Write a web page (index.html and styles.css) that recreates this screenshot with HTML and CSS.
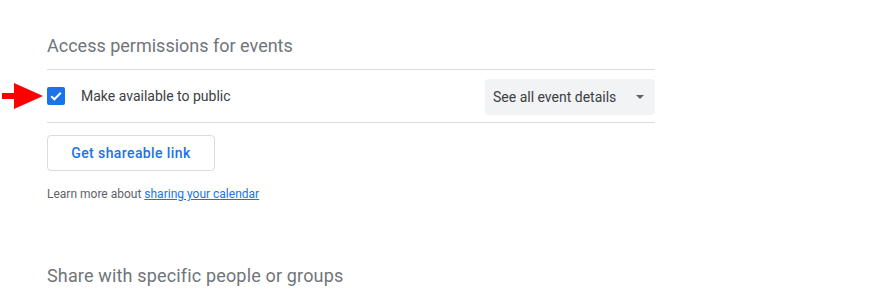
FILE: index.html
```html
<!DOCTYPE html>
<html>
<head>
<meta charset="utf-8">
<link rel="stylesheet" href="styles.css">
</head>
<body>
<div class="section">
  <h2 class="heading">Access permissions for events</h2>
  <div class="row">
    <svg class="annot-arrow" width="44" height="28" viewBox="0 0 44 28">
      <rect x="2" y="11" width="14" height="6" fill="#ff0000"/>
      <polygon points="14,1 43,14 14,27" fill="#ff0000"/>
    </svg>
    <label class="check">
      <span class="box">
        <svg width="18" height="18" viewBox="0 0 18 18"><path d="M4.2 9.2 L7.4 12.3 L13.8 5.8" fill="none" stroke="#fff" stroke-width="2"/></svg>
      </span>
      <span class="check-label">Make available to public</span>
    </label>
    <div class="select">
      <span>See all event details</span>
      <span class="caret"></span>
    </div>
  </div>
  <button class="btn">Get shareable link</button>
  <p class="note">Learn more about <a href="#">sharing your calendar</a></p>
  <h2 class="heading heading2">Share with specific people or groups</h2>
</div>
</body>
</html>
```
FILE: styles.css
```css
html, body {
  margin: 0;
  padding: 0;
  background: #fff;
}
body {
  font-family: Roboto, "Liberation Sans", Arial, sans-serif;
  color: #3c4043;
}
.section {
  width: 608px;
  padding-left: 47px;
  padding-top: 34px;
}
.heading {
  margin: 0;
  font-weight: 400;
  font-size: 18px;
  line-height: 24px;
  color: #70757a;
  padding-bottom: 11px;
  border-bottom: 1px solid #dadce0;
}
.heading2 {
  border-bottom: none;
  margin-top: 62px;
  letter-spacing: 0.16px;
}
.row {
  position: relative;
  display: flex;
  align-items: center;
  justify-content: space-between;
  height: 52px;
  border-bottom: 1px solid #dadce0;
}
.annot-arrow {
  position: absolute;
  left: -47px;
  top: 12px;
}
.check {
  display: flex;
  align-items: center;
  gap: 16px;
  font-size: 14px;
  color: #3c4043;
}
.box {
  width: 18px;
  height: 18px;
  border-radius: 2px;
  background: #1a73e8;
  display: block;
}
.box svg { display: block; }
.select {
  display: flex;
  align-items: center;
  justify-content: space-between;
  box-sizing: border-box;
  width: 170px;
  height: 36px;
  padding: 0 11px 0 8px;
  background: #f1f3f4;
  border-radius: 4px;
  font-size: 14px;
  color: #3c4043;
  margin-top: 1px;
}
.caret {
  width: 0;
  height: 0;
  border-left: 4px solid transparent;
  border-right: 4px solid transparent;
  border-top: 4px solid #5f6368;
}
.btn {
  display: block;
  margin-top: 12px;
  height: 36px;
  width: 168px;
  background: #fff;
  border: 1px solid #dadce0;
  border-radius: 4px;
  font-family: Roboto, "Liberation Sans", Arial, sans-serif;
  font-size: 14px;
  font-weight: 500;
  color: #1a73e8;
  letter-spacing: 0.4px;
  padding: 0;
}
.note {
  margin: 15px 0 0;
  font-size: 12px;
  line-height: 16px;
  color: #5f6368;
}
.note a {
  color: #1a73e8;
}
```
